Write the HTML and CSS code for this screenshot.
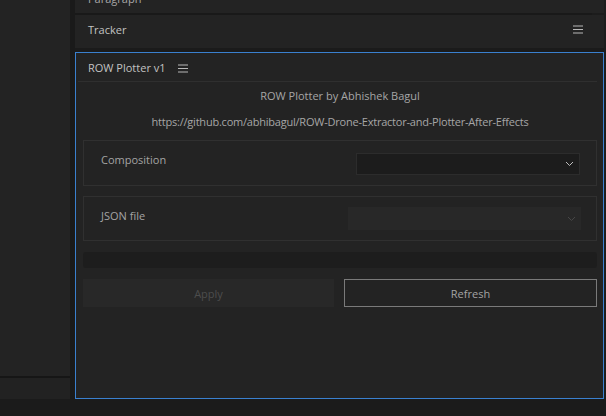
FILE: index.html
```html
<!DOCTYPE html>
<html>
<head>
<meta charset="utf-8">
<link rel="stylesheet" href="styles.css">
</head>
<body>
<div class="app">
  <div class="main">
    <div class="left">
      <div class="left-top"></div>
      <div class="left-line"></div>
      <div class="left-bottom"></div>
    </div>
    <div class="gutter"></div>
    <div class="right">
      <div class="para"><span class="para-title">Paragraph</span></div>
      <div class="para-sep"></div>
      <div class="tracker">
        <span class="panel-title">Tracker</span>
        <svg class="ham ham-right" width="10" height="9" viewBox="0 0 10 9"><path d="M0 1h10M0 4.5h10M0 8h10" stroke="#b8b8b8" stroke-width="1"/></svg>
      </div>
      <div class="gap"></div>
      <div class="plotter">
        <div class="plotter-head">
          <span class="panel-title">ROW Plotter v1</span>
          <svg class="ham" width="10" height="9" viewBox="0 0 10 9"><path d="M0 1h10M0 4.5h10M0 8h10" stroke="#b8b8b8" stroke-width="1"/></svg>
        </div>
        <div class="head-sep"></div>
        <div class="info">
          <p>ROW Plotter by Abhishek Bagul</p>
          <p class="url">https://github.com/abhibagul/ROW-Drone-Extractor-and-Plotter-After-Effects</p>
        </div>
        <div class="field">
          <span class="label">Composition</span>
          <div class="select select-comp">
            <svg width="9" height="6" viewBox="0 0 9 6"><path d="M1 1l3.5 3.5L8 1" fill="none" stroke="#bdbdbd" stroke-width="1"/></svg>
          </div>
        </div>
        <div class="field">
          <span class="label">JSON file</span>
          <div class="select select-json">
            <svg width="9" height="6" viewBox="0 0 9 6"><path d="M1 1l3.5 3.5L8 1" fill="none" stroke="#474747" stroke-width="1"/></svg>
          </div>
        </div>
        <div class="progress"></div>
        <div class="buttons">
          <div class="btn btn-apply">Apply</div>
          <div class="btn btn-refresh">Refresh</div>
        </div>
      </div>
    </div>
    <div class="edge"></div>
  </div>
  <div class="bottom"></div>
</div>
</body>
</html>
```
FILE: styles.css
```css
* { box-sizing: border-box; }
html, body { margin: 0; padding: 0; }
body {
  width: 606px;
  height: 416px;
  overflow: hidden;
  background: #1c1c1c;
  font-family: "Open Sans", "Noto Sans", sans-serif;
  font-size: 11px;
  color: #a3a3a3;
}
.app { display: flex; flex-direction: column; height: 416px; }
.main { display: flex; height: 399px; }
.left { width: 70px; display: flex; flex-direction: column; }
.left-top { height: 376px; background: #232323; }
.left-line { height: 2px; background: #161616; }
.left-bottom { flex: 1; background: #222222; }
.gutter { width: 5px; background: #1a1a1a; }
.right { width: 529px; display: flex; flex-direction: column; }
.edge { flex: 1; background: #1d1d1d; }
.bottom { flex: 1; background: #1b1b1b; }

.para { height: 13px; background: #232323; overflow: hidden; padding-left: 13px; }
.para-title { display: block; margin-top: -9px; line-height: 16px; font-size: 11px; color: #a8a8a8; }
.para-sep { height: 2px; background: #191919; margin-right: 12px; }
.tracker {
  height: 33px;
  background: #232323;
  display: flex;
  align-items: center;
  padding-left: 13px;
  padding-right: 21px;
  padding-bottom: 4px;
}
.panel-title { font-size: 11px; color: #c2c2c2; line-height: 16px; }
.ham { display: block; margin-left: 12px; }
.ham-right { margin-left: auto; }
.gap { height: 4px; background: #1b1b1b; }

.plotter {
  height: 347px;
  border: 1px solid #3a80cf;
  background: #232323;
  display: flex;
  flex-direction: column;
  padding: 0 6px 0 7px;
}
.plotter-head {
  height: 28px;
  display: flex;
  align-items: center;
  padding-left: 5px;
  padding-top: 2px;
}
.head-sep { height: 1px; background: #2f2f2f; margin: 0 0 0 -5px; }
.info { padding: 6px 0 10px; display: flex; flex-direction: column; gap: 10px; text-align: center; }
.info p { margin: 0; line-height: 16px; color: #a6a6a6; }
.info .url { letter-spacing: -0.22px; }

.field {
  height: 46px;
  border: 1px solid #303030;
  display: flex;
  margin-bottom: 10px;
}
.field + .field { height: 45px; margin-bottom: 0; }
.label { align-self: flex-start; padding: 11px 0 0 17px; line-height: 16px; color: #a3a3a3; }
.select {
  align-self: center;
  margin-left: auto;
  display: flex;
  align-items: center;
  justify-content: flex-end;
}
.select-comp {
  width: 224px;
  height: 22px;
  margin-right: 16px;
  background: #1c1c1c;
  border: 1px solid #2c2c2c;
  padding-right: 5px;
  margin-top: 2px;
}
.select-json {
  width: 233px;
  height: 23px;
  margin-right: 15px;
  background: #282828;
  padding-right: 5px;
}
.progress { height: 16px; margin-top: 11px; background: #1d1d1d; border-radius: 3px; }
.buttons { display: flex; gap: 10px; margin-top: 11px; }
.btn {
  flex: 1;
  height: 28px;
  display: flex;
  align-items: center;
  justify-content: center;
}
.btn-apply { background: #282828; color: #4d4d4d; }
.btn-refresh { border: 1px solid #7a7a7a; color: #a3a3a3; }
```
